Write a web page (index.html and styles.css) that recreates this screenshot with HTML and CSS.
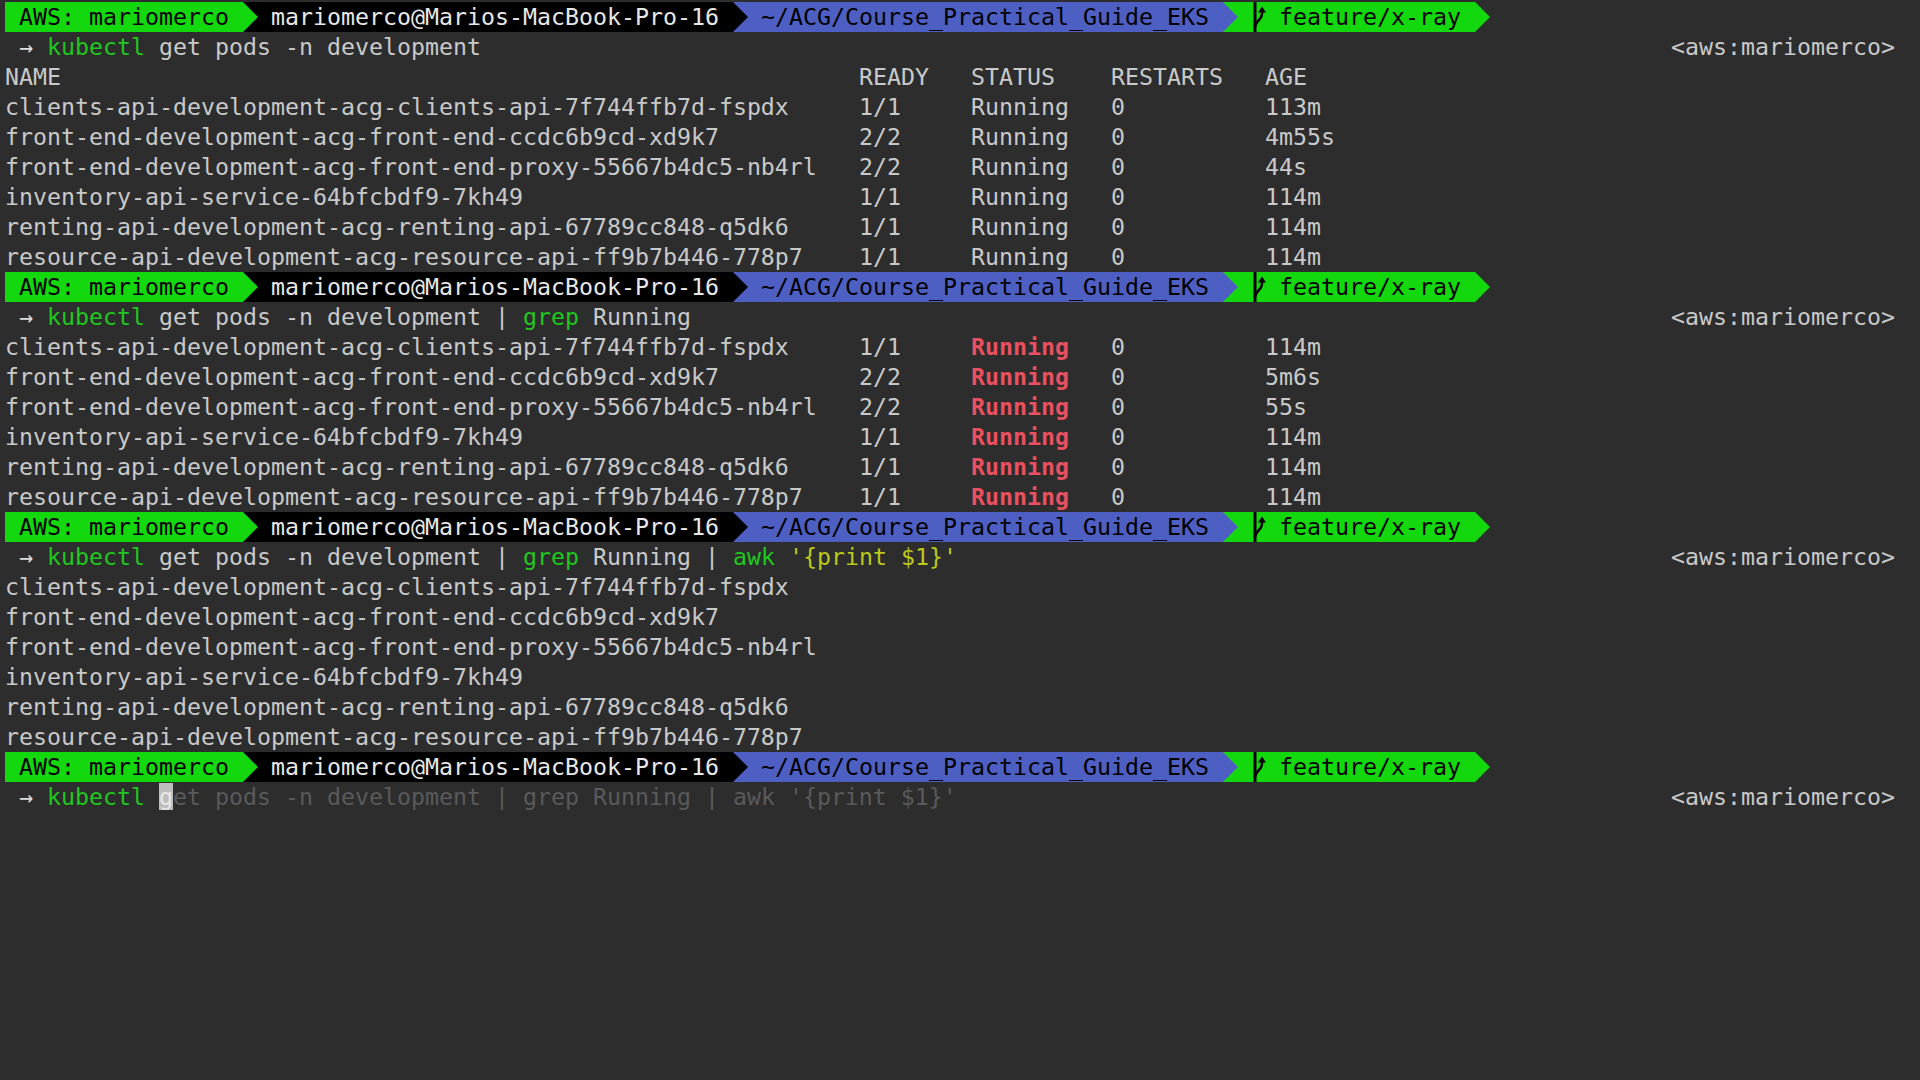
FILE: index.html
```html
<!DOCTYPE html>
<html lang="en">
<head>
<meta charset="utf-8">
<title>Terminal</title>
<link rel="stylesheet" href="styles.css">
</head>
<body>
<main class="term">
  <div class="prompt"><span class="seg seg-aws">AWS: mariomerco</span><span class="seg seg-host">mariomerco@Marios-MacBook-Pro-16</span><span class="seg seg-path">~/ACG/Course_Practical_Guide_EKS</span><span class="seg seg-git"><svg class="branch" viewBox="0 0 14 30"><path d="M4 0V30" class="bar"/><path d="M4 25C4 19 11 18 11 12V7" class="curve"/><path d="M7 10.5L11 4.5L15 10.5Z" class="head"/></svg><span>feature/x-ray</span></span></div>
  <div class="cmd"><span><span class="arrow">→</span> <span class="ok">kubectl</span> get pods -n development</span><span>&lt;aws:mariomerco&gt;</span></div>
  <div class="row"><span>NAME</span><span>READY</span><span>STATUS</span><span>RESTARTS</span><span>AGE</span></div>
  <div class="row"><span>clients-api-development-acg-clients-api-7f744ffb7d-fspdx</span><span>1/1</span><span>Running</span><span>0</span><span>113m</span></div>
  <div class="row"><span>front-end-development-acg-front-end-ccdc6b9cd-xd9k7</span><span>2/2</span><span>Running</span><span>0</span><span>4m55s</span></div>
  <div class="row"><span>front-end-development-acg-front-end-proxy-55667b4dc5-nb4rl</span><span>2/2</span><span>Running</span><span>0</span><span>44s</span></div>
  <div class="row"><span>inventory-api-service-64bfcbdf9-7kh49</span><span>1/1</span><span>Running</span><span>0</span><span>114m</span></div>
  <div class="row"><span>renting-api-development-acg-renting-api-67789cc848-q5dk6</span><span>1/1</span><span>Running</span><span>0</span><span>114m</span></div>
  <div class="row"><span>resource-api-development-acg-resource-api-ff9b7b446-778p7</span><span>1/1</span><span>Running</span><span>0</span><span>114m</span></div>

  <div class="prompt"><span class="seg seg-aws">AWS: mariomerco</span><span class="seg seg-host">mariomerco@Marios-MacBook-Pro-16</span><span class="seg seg-path">~/ACG/Course_Practical_Guide_EKS</span><span class="seg seg-git"><svg class="branch" viewBox="0 0 14 30"><path d="M4 0V30" class="bar"/><path d="M4 25C4 19 11 18 11 12V7" class="curve"/><path d="M7 10.5L11 4.5L15 10.5Z" class="head"/></svg><span>feature/x-ray</span></span></div>
  <div class="cmd"><span><span class="arrow">→</span> <span class="ok">kubectl</span> get pods -n development | <span class="ok">grep</span> Running</span><span>&lt;aws:mariomerco&gt;</span></div>
  <div class="row"><span>clients-api-development-acg-clients-api-7f744ffb7d-fspdx</span><span>1/1</span><span class="hit">Running</span><span>0</span><span>114m</span></div>
  <div class="row"><span>front-end-development-acg-front-end-ccdc6b9cd-xd9k7</span><span>2/2</span><span class="hit">Running</span><span>0</span><span>5m6s</span></div>
  <div class="row"><span>front-end-development-acg-front-end-proxy-55667b4dc5-nb4rl</span><span>2/2</span><span class="hit">Running</span><span>0</span><span>55s</span></div>
  <div class="row"><span>inventory-api-service-64bfcbdf9-7kh49</span><span>1/1</span><span class="hit">Running</span><span>0</span><span>114m</span></div>
  <div class="row"><span>renting-api-development-acg-renting-api-67789cc848-q5dk6</span><span>1/1</span><span class="hit">Running</span><span>0</span><span>114m</span></div>
  <div class="row"><span>resource-api-development-acg-resource-api-ff9b7b446-778p7</span><span>1/1</span><span class="hit">Running</span><span>0</span><span>114m</span></div>

  <div class="prompt"><span class="seg seg-aws">AWS: mariomerco</span><span class="seg seg-host">mariomerco@Marios-MacBook-Pro-16</span><span class="seg seg-path">~/ACG/Course_Practical_Guide_EKS</span><span class="seg seg-git"><svg class="branch" viewBox="0 0 14 30"><path d="M4 0V30" class="bar"/><path d="M4 25C4 19 11 18 11 12V7" class="curve"/><path d="M7 10.5L11 4.5L15 10.5Z" class="head"/></svg><span>feature/x-ray</span></span></div>
  <div class="cmd"><span><span class="arrow">→</span> <span class="ok">kubectl</span> get pods -n development | <span class="ok">grep</span> Running | <span class="ok">awk</span> <span class="str">'{print $1}'</span></span><span>&lt;aws:mariomerco&gt;</span></div>
  <div class="line">clients-api-development-acg-clients-api-7f744ffb7d-fspdx</div>
  <div class="line">front-end-development-acg-front-end-ccdc6b9cd-xd9k7</div>
  <div class="line">front-end-development-acg-front-end-proxy-55667b4dc5-nb4rl</div>
  <div class="line">inventory-api-service-64bfcbdf9-7kh49</div>
  <div class="line">renting-api-development-acg-renting-api-67789cc848-q5dk6</div>
  <div class="line">resource-api-development-acg-resource-api-ff9b7b446-778p7</div>

  <div class="prompt"><span class="seg seg-aws">AWS: mariomerco</span><span class="seg seg-host">mariomerco@Marios-MacBook-Pro-16</span><span class="seg seg-path">~/ACG/Course_Practical_Guide_EKS</span><span class="seg seg-git"><svg class="branch" viewBox="0 0 14 30"><path d="M4 0V30" class="bar"/><path d="M4 25C4 19 11 18 11 12V7" class="curve"/><path d="M7 10.5L11 4.5L15 10.5Z" class="head"/></svg><span>feature/x-ray</span></span></div>
  <div class="cmd"><span><span class="arrow">→</span> <span class="ok">kubectl</span> <span class="cursor">g</span><span class="ghost">et pods -n development | grep Running | awk '{print $1}'</span></span><span>&lt;aws:mariomerco&gt;</span></div>
</main>
</body>
</html>
```
FILE: styles.css
```css
html, body {
  margin: 0;
  height: 100%;
  background: #2d2d2d;
}
.term {
  box-sizing: border-box;
  height: 1080px;
  padding: 2px 25px 0 5px;
  color: #c9c9c9;
  font-family: "DejaVu Sans Mono", "Liberation Mono", monospace;
  font-size: 23.25px;
  line-height: 30px;
}
.prompt, .cmd, .row, .line { white-space: pre; }
.prompt {
  display: flex;
  height: 30px;
}
.seg {
  position: relative;
  display: flex;
  height: 30px;
}
.seg::after {
  content: "";
  position: absolute;
  z-index: 1;
  top: 0;
  right: -15px;
  width: 15px;
  height: 30px;
  clip-path: polygon(0 0, 100% 50%, 0 100%);
}
.seg-aws {
  width: 210px;
  padding: 0 14px;
  background: #14d80e;
  color: #000;
}
.seg-aws::after { background: #14d80e; }
.seg-host {
  width: 448px;
  padding: 0 14px 0 28px;
  background: #000;
  color: #e8e8e8;
}
.seg-host::after { background: #000; }
.seg-path {
  width: 448px;
  padding: 0 14px 0 28px;
  background: #4e5fc4;
  color: #000;
}
.seg-path::after { background: #4e5fc4; }
.seg-git {
  width: 224px;
  padding: 0 14px;
  background: #14d80e;
  color: #000;
}
.seg-git::after { background: #14d80e; }
.branch {
  flex: none;
  width: 14px;
  height: 30px;
  margin: 0 14px;
  overflow: visible;
}
.bar, .curve { fill: none; stroke: #000; }
.bar { stroke-width: 3; }
.curve { stroke-width: 2.5; }
.head { fill: #000; }
.cmd {
  display: flex;
  justify-content: space-between;
  height: 30px;
}
.arrow { margin-left: 14px; color: #dedede; }
.ok { color: #1fc81f; }
.str { color: #bcc81a; }
.ghost { color: #5a5a5a; }
.cursor {
  background: #bdbdbd;
  color: #e8e8e8;
}
.row {
  display: grid;
  grid-template-columns: 854px 112px 140px 154px auto;
  height: 30px;
}
.line { height: 30px; }
.hit {
  color: #ea5060;
  font-weight: 700;
}
```
